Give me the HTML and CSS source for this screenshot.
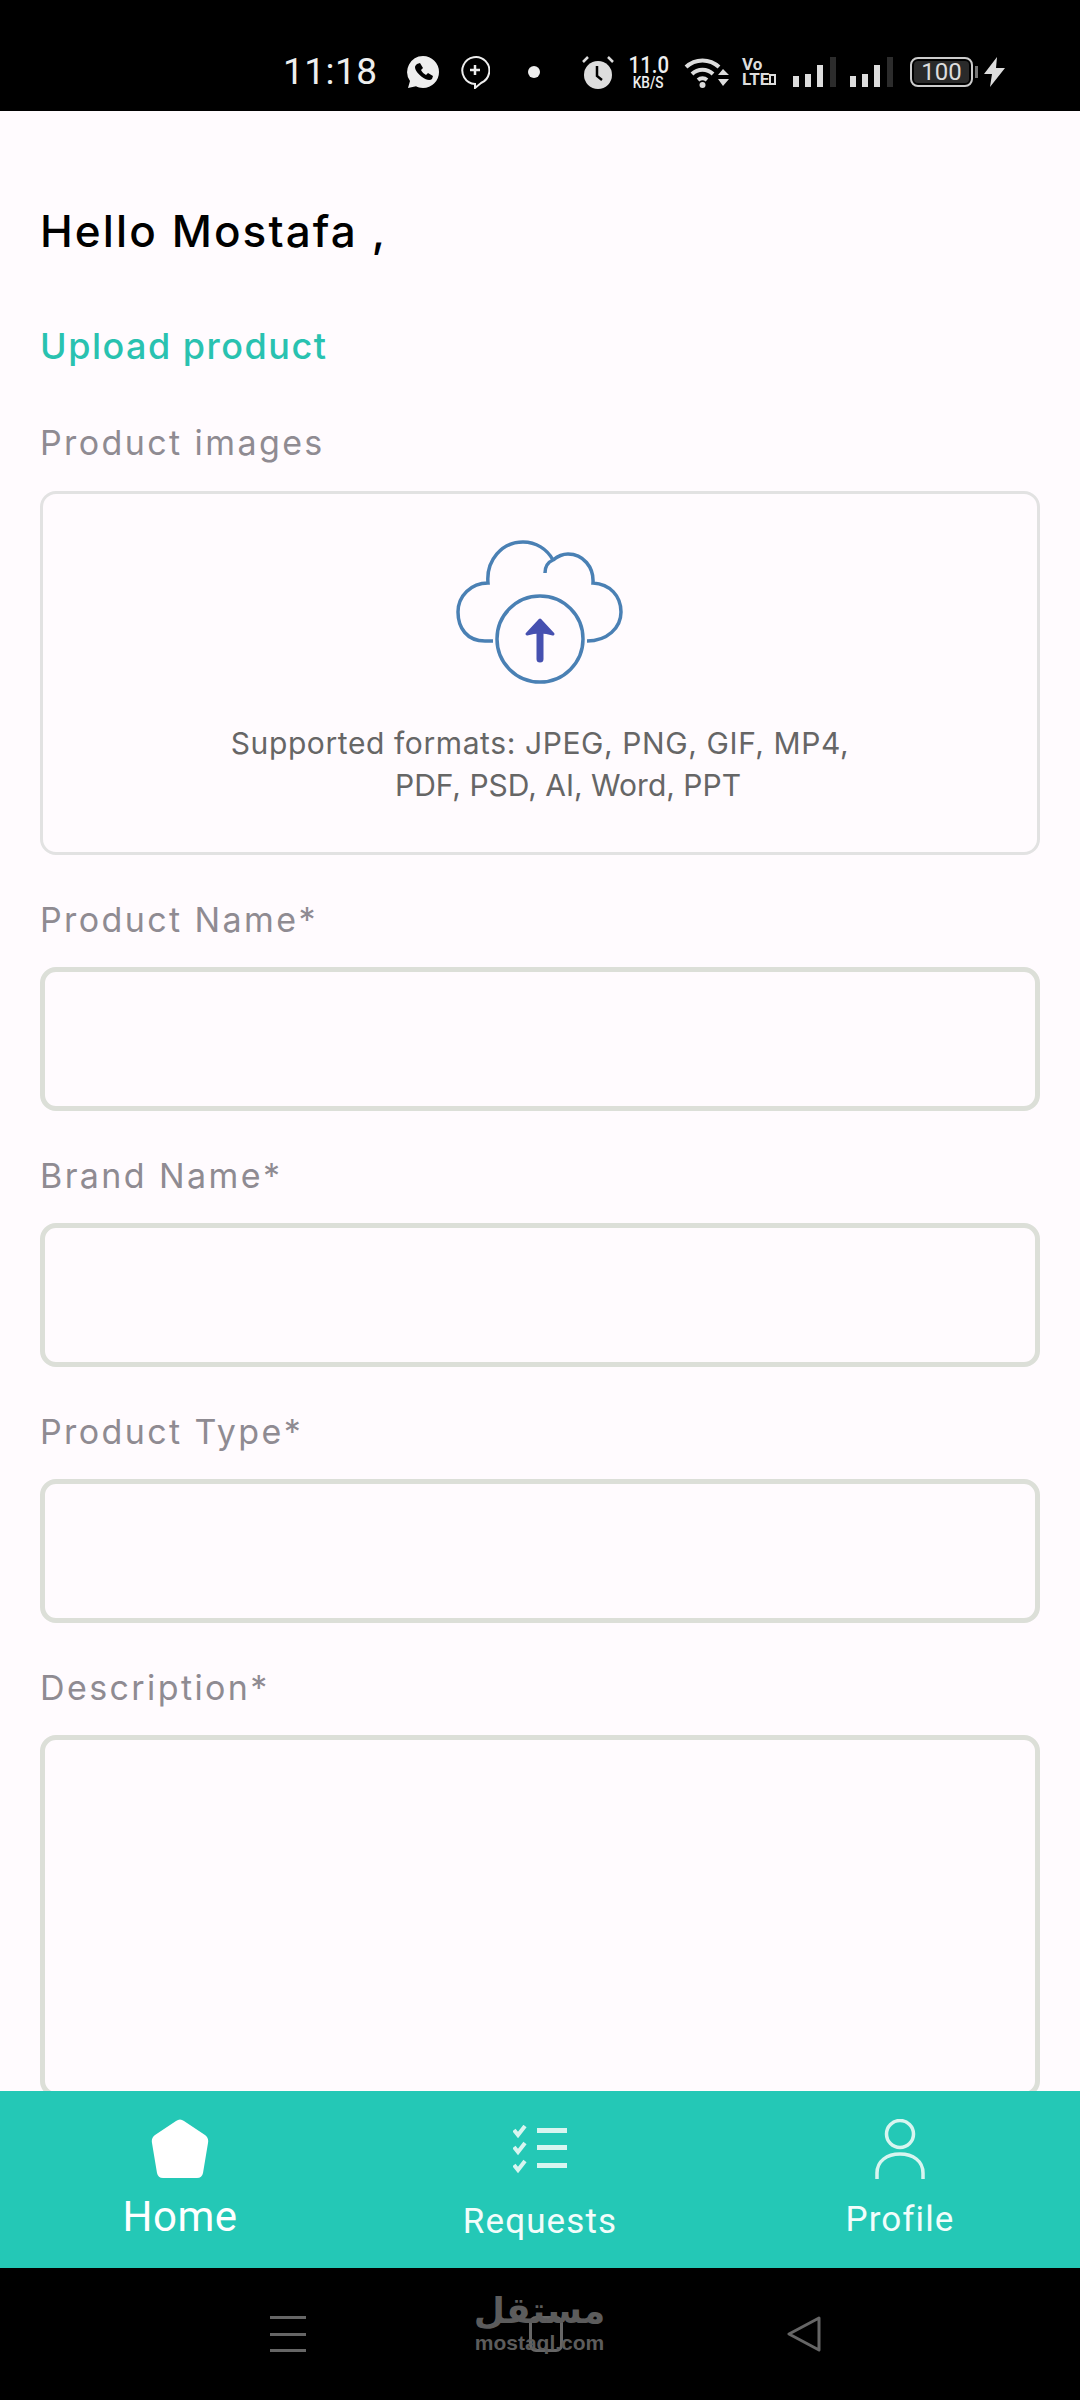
FILE: index.html
```
<!DOCTYPE html>
<html>

<head>
    <title>Upload product</title>

    <link rel="stylesheet" href="styles.css">
</head>

<body>

    <header class="status-bar">
        <span class="status-time">11:18</span>

        <svg class="icon-whatsapp" viewBox="0 0 32 32">
            <path d="M16 0a16 16 0 0 1 0 32c-3 0-5-.6-7-1.700L1 32l2-7A16 16 0 0 1 16 0z" fill="#eee" />
            <path d="M10 8l3-1 3 5-2 2c1 2 3 4 5 5l2-2 5 3-1 3c-2 2-6 1-10-2s-7-7-7-10c0-1 1-2 2-3z" fill="#000" />
        </svg>

        <svg class="icon-bubble" viewBox="0 0 30 34">
            <path d="M15 29A13.500 13.500 0 1 1 21 28L15 33z" fill="none" stroke="#eee" stroke-width="2" />
            <path d="M15 10v10M10 15h10" stroke="#eee" stroke-width="2.500" />
        </svg>

        <span class="status-dot"></span>

        <svg class="icon-alarm" viewBox="0 0 32 34">
            <circle cx="16" cy="20" r="14" fill="#ddd" />
            <path d="M1 7l5-5M31 7l-5-5" stroke="#ddd" stroke-width="2.500" />
            <path d="M15 11v10l5 4" fill="none" stroke="#000" stroke-width="2.500" />
        </svg>

        <div class="status-speed">
            <span class="speed-value">11.0</span>
            <span class="speed-unit">KB/S</span>
        </div>

        <svg class="icon-wifi" viewBox="0 0 45 32">
            <path d="M2 11a24 24 0 0 1 33 0M8 18a15 15 0 0 1 21 0M14 24a7 7 0 0 1 9 0" fill="none" stroke="#ddd" stroke-width="4" />
            <circle cx="18.500" cy="29" r="3" fill="#ddd" />
            <path d="M34 19l5-6 6 6zM34 23l5 7 6-7z" fill="#ddd" />
        </svg>

        <div class="status-volte">
            <span>Vo</span>
            <span>LTE<i class="volte-mark"></i></span>
        </div>

        <svg class="icon-signal icon-signal-first" viewBox="0 0 43 30">
            <path d="M0 19h6v11H0zM12 17h6v13h-6zM24 8h6v22h-6z" fill="#ddd" />
            <path d="M37 0h6v30h-6z" fill="#2c2c2c" />
        </svg>

        <svg class="icon-signal" viewBox="0 0 43 30">
            <path d="M0 19h6v11H0zM12 17h6v13h-6zM24 8h6v22h-6z" fill="#ddd" />
            <path d="M37 0h6v30h-6z" fill="#2c2c2c" />
        </svg>

        <div class="status-battery">
            <span class="battery-level">100</span>
        </div>

        <svg class="icon-bolt" viewBox="0 0 21 30">
            <path d="M13 0L0 17h8l-2 13 15-19h-9z" fill="#ddd" />
        </svg>
    </header>

    <main class="page">

        <h1 class="greeting">Hello Mostafa ,</h1>
        <h2 class="page-title">Upload product</h2>

        <div class="field-label field-label-first">Product images</div>
        <div class="upload-box">
            <svg class="upload-icon" viewBox="0 0 170 145">
                <path d="M38 101H30C12 101 3 88 3 72C3 56 16 43 33 43C31 20 47 2 68 2C81 2 92 9 98 20C91 23 90 28 90 33M98 20C103 16 108 14 113 14C128 14 139 27 138 43C155 44 166 56 166 72C166 88 152 101 132 101"
                    fill="none" stroke="#4a80b4" stroke-width="3.500" />
                <circle cx="85" cy="99" r="43" fill="none" stroke="#4a80b4" stroke-width="3.500" />
                <path d="M85 84V119" stroke="#4650b0" stroke-width="7" stroke-linecap="round" />
                <path d="M85 80L72 94Q85 90 98 94z" fill="#4650b0" stroke="#4650b0" stroke-width="3" stroke-linejoin="round" />
            </svg>
            <p class="upload-hint">
                Supported formats: JPEG, PNG, GIF, MP4,
                <span class="upload-hint-last">PDF, PSD, AI, Word, PPT</span>
            </p>
        </div>

        <label class="field-label" for="productName">Product Name*</label>
        <input class="field-input" type="text" id="productName">

        <label class="field-label" for="brandName">Brand Name*</label>
        <input class="field-input" type="text" id="brandName">

        <label class="field-label" for="productType">Product Type*</label>
        <input class="field-input" type="text" id="productType">

        <label class="field-label" for="description">Description*</label>
        <textarea class="field-input field-textarea" id="description"></textarea>

    </main>

    <nav class="tab-bar">
        <a class="tab tab-active" href="#">
            <svg class="tab-icon tab-icon-home" viewBox="0 0 58 60">
                <path d="M25 2Q29 -1 33 2L54 16Q58 19 57 24L52 54Q51 59 46 59H12Q7 59 6 54L1 24Q0 19 4 16z" fill="#fff" />
            </svg>
            <span class="tab-label">Home</span>
        </a>
        <a class="tab" href="#">
            <svg class="tab-icon tab-icon-list" viewBox="0 0 54 50">
                <g fill="none" stroke="#d8f5f0" stroke-width="4">
                    <path d="M1 5l4 5 7-9M1 22l4 5 7-9M1 40l4 5 7-9" />
                </g>
                <path d="M24 3h30v5H24zM24 20h30v5H24zM24 38h30v5H24z" fill="#d8f5f0" />
            </svg>
            <span class="tab-label">Requests</span>
        </a>
        <a class="tab" href="#">
            <svg class="tab-icon tab-icon-profile" viewBox="0 0 50 60">
                <circle cx="25" cy="15" r="13.500" fill="none" stroke="#d8f5f0" stroke-width="3.500" />
                <path d="M2 60V54C2 42 12 35 25 35S48 42 48 54V60" fill="none" stroke="#d8f5f0" stroke-width="3.500" />
            </svg>
            <span class="tab-label">Profile</span>
        </a>
    </nav>

    <footer class="system-bar">
        <div class="system-menu">
            <span></span>
            <span></span>
            <span></span>
        </div>

        <div class="system-home">
            <span class="system-square"></span>
            <div class="watermark">
                <span class="watermark-ar">مستقل</span>
                <span class="watermark-en">mostaql.com</span>
            </div>
        </div>

        <svg class="system-back" viewBox="0 0 34 36">
            <path d="M32 2L2 18L32 34z" fill="none" stroke="#666" stroke-width="3" stroke-linejoin="round" />
        </svg>
    </footer>

</body>

</html>
```

FILE: styles.css
```
* {
    margin: 0;
    padding: 0;
    box-sizing: border-box;
}

html,
body {
    width: 1080px;
    height: 2400px;
}

body {
    display: flex;
    flex-direction: column;
    overflow: hidden;
    background-color: #fffbfe;
    font-family: "Inter", "Liberation Sans", sans-serif;
}

/* status bar */

.status-bar {
    display: flex;
    align-items: center;
    flex: none;
    height: 111px;
    padding: 33px 0 0 283px;
    background-color: #000;
    color: #eee;
    font-family: "Roboto", sans-serif;
}

.status-time {
    width: 92px;
    font-size: 37px;
    line-height: 44px;
    letter-spacing: .5px;
}

.icon-whatsapp {
    width: 32px;
    height: 32px;
    margin-left: 32px;
}

.icon-bubble {
    width: 30px;
    height: 34px;
    margin-left: 21px;
}

.status-dot {
    width: 12px;
    height: 12px;
    margin-left: 38px;
    border-radius: 50%;
    background-color: #eee;
}

.icon-alarm {
    width: 32px;
    height: 34px;
    margin-left: 42px;
}

.status-speed {
    display: flex;
    flex-direction: column;
    align-items: center;
    width: 43px;
    margin-left: 13px;
    font-weight: 500;
}

.speed-value {
    font-size: 24px;
    line-height: 22px;
    transform: scaleX(.85);
}

.speed-unit {
    font-size: 16px;
    line-height: 14px;
    transform: scaleX(.85);
}

.icon-wifi {
    width: 45px;
    height: 32px;
    margin-left: 14px;
}

.status-volte {
    display: flex;
    flex-direction: column;
    width: 35px;
    margin-left: 13px;
    font-size: 17px;
    font-weight: 700;
    line-height: 15px;
    color: #ddd;
}

.volte-mark {
    display: inline-block;
    width: 7px;
    height: 11px;
    border: 2px solid #ddd;
}

.icon-signal {
    width: 43px;
    height: 30px;
    margin-left: 14px;
}

.icon-signal-first {
    margin-left: 16px;
}

.status-battery {
    position: relative;
    width: 63px;
    height: 30px;
    margin-left: 17px;
    padding: 2px;
    border: 2px solid #ccc;
    border-radius: 8px;
}

.status-battery::after {
    content: "";
    position: absolute;
    top: 7px;
    right: -7px;
    width: 3px;
    height: 12px;
    background-color: #777;
}

.battery-level {
    display: block;
    height: 22px;
    border-radius: 4px;
    background-color: #2a2a2a;
    font-size: 24px;
    line-height: 22px;
    text-align: center;
    color: #ddd;
}

.icon-bolt {
    width: 21px;
    height: 30px;
    margin-left: 11px;
}

/* form */

.page {
    flex: 1;
    min-height: 0;
    overflow: hidden;
    padding: 90px 40px 0 40px;
}

.greeting {
    font-size: 44px;
    font-weight: 500;
    line-height: 60px;
    letter-spacing: 2.1px;
    color: #000;
}

.page-title {
    margin-top: 60px;
    font-size: 36px;
    font-weight: 500;
    line-height: 50px;
    letter-spacing: 1.5px;
    color: #29c2b0;
}

.field-label {
    display: block;
    margin-top: 40px;
    margin-bottom: 22px;
    font-size: 34px;
    line-height: 50px;
    letter-spacing: 2.4px;
    color: #8f8b92;
}

.field-label-first {
    margin-top: 47px;
    margin-bottom: 23px;
}

.upload-box {
    display: flex;
    flex-direction: column;
    align-items: center;
    height: 364px;
    padding-top: 46px;
    border: 3px solid #e2e2e2;
    border-radius: 16px;
}

.upload-icon {
    width: 170px;
    height: 145px;
}

.upload-hint {
    margin-top: 37px;
    font-size: 30px;
    line-height: 42px;
    letter-spacing: .6px;
    text-align: center;
    color: #666;
}

.upload-hint-last {
    display: block;
    margin-left: 56px;
    letter-spacing: 0;
}

.field-input {
    display: block;
    width: 100%;
    height: 144px;
    border: 5px solid #dcdfd8;
    border-radius: 16px;
    background-color: transparent;
    outline: none;
}

.field-textarea {
    height: 362px;
    resize: none;
}

/* bottom tabs */

.tab-bar {
    display: grid;
    grid-template-columns: repeat(3, 1fr);
    flex: none;
    height: 177px;
    background-color: #24c8b6;
}

.tab {
    display: flex;
    flex-direction: column;
    align-items: center;
    text-decoration: none;
    color: #f2fdfb;
    font-family: "Roboto", sans-serif;
}

.tab-icon {
    flex: none;
}

.tab-icon-home {
    width: 58px;
    height: 60px;
    margin-top: 28px;
}

.tab-icon-list {
    width: 54px;
    height: 50px;
    margin-top: 34px;
}

.tab-icon-profile {
    width: 50px;
    height: 60px;
    margin-top: 28px;
}

.tab-label {
    margin-top: 17px;
    font-size: 35px;
    line-height: 48px;
    letter-spacing: 1.1px;
}

.tab-active .tab-label {
    margin-top: 14px;
    font-size: 42px;
    letter-spacing: .5px;
    color: #fff;
}

.tab-icon-list + .tab-label {
    margin-top: 23px;
}

/* system nav */

.system-bar {
    display: flex;
    align-items: center;
    flex: none;
    height: 132px;
    padding: 0 0 0 270px;
    background-color: #000;
}

.system-menu {
    display: flex;
    flex-direction: column;
    justify-content: space-between;
    width: 36px;
    height: 36px;
}

.system-menu span {
    height: 3px;
    background-color: #666;
}

.system-home {
    position: relative;
    width: 34px;
    height: 36px;
    margin-left: 223px;
}

.system-square {
    display: block;
    width: 34px;
    height: 36px;
    border: 3px solid #666;
    border-radius: 7px;
}

.watermark {
    position: absolute;
    top: -29px;
    left: -55px;
    display: flex;
    flex-direction: column;
    align-items: center;
    width: 131px;
    color: #5c5c5c;
}

.watermark-ar {
    font-family: "DejaVu Sans", sans-serif;
    font-size: 36px;
    font-weight: 700;
    line-height: 47px;
}

.watermark-en {
    font-family: "Liberation Sans", sans-serif;
    font-size: 21px;
    font-weight: 700;
    line-height: 18px;
}

.system-back {
    width: 34px;
    height: 36px;
    margin-left: 224px;
}
```
